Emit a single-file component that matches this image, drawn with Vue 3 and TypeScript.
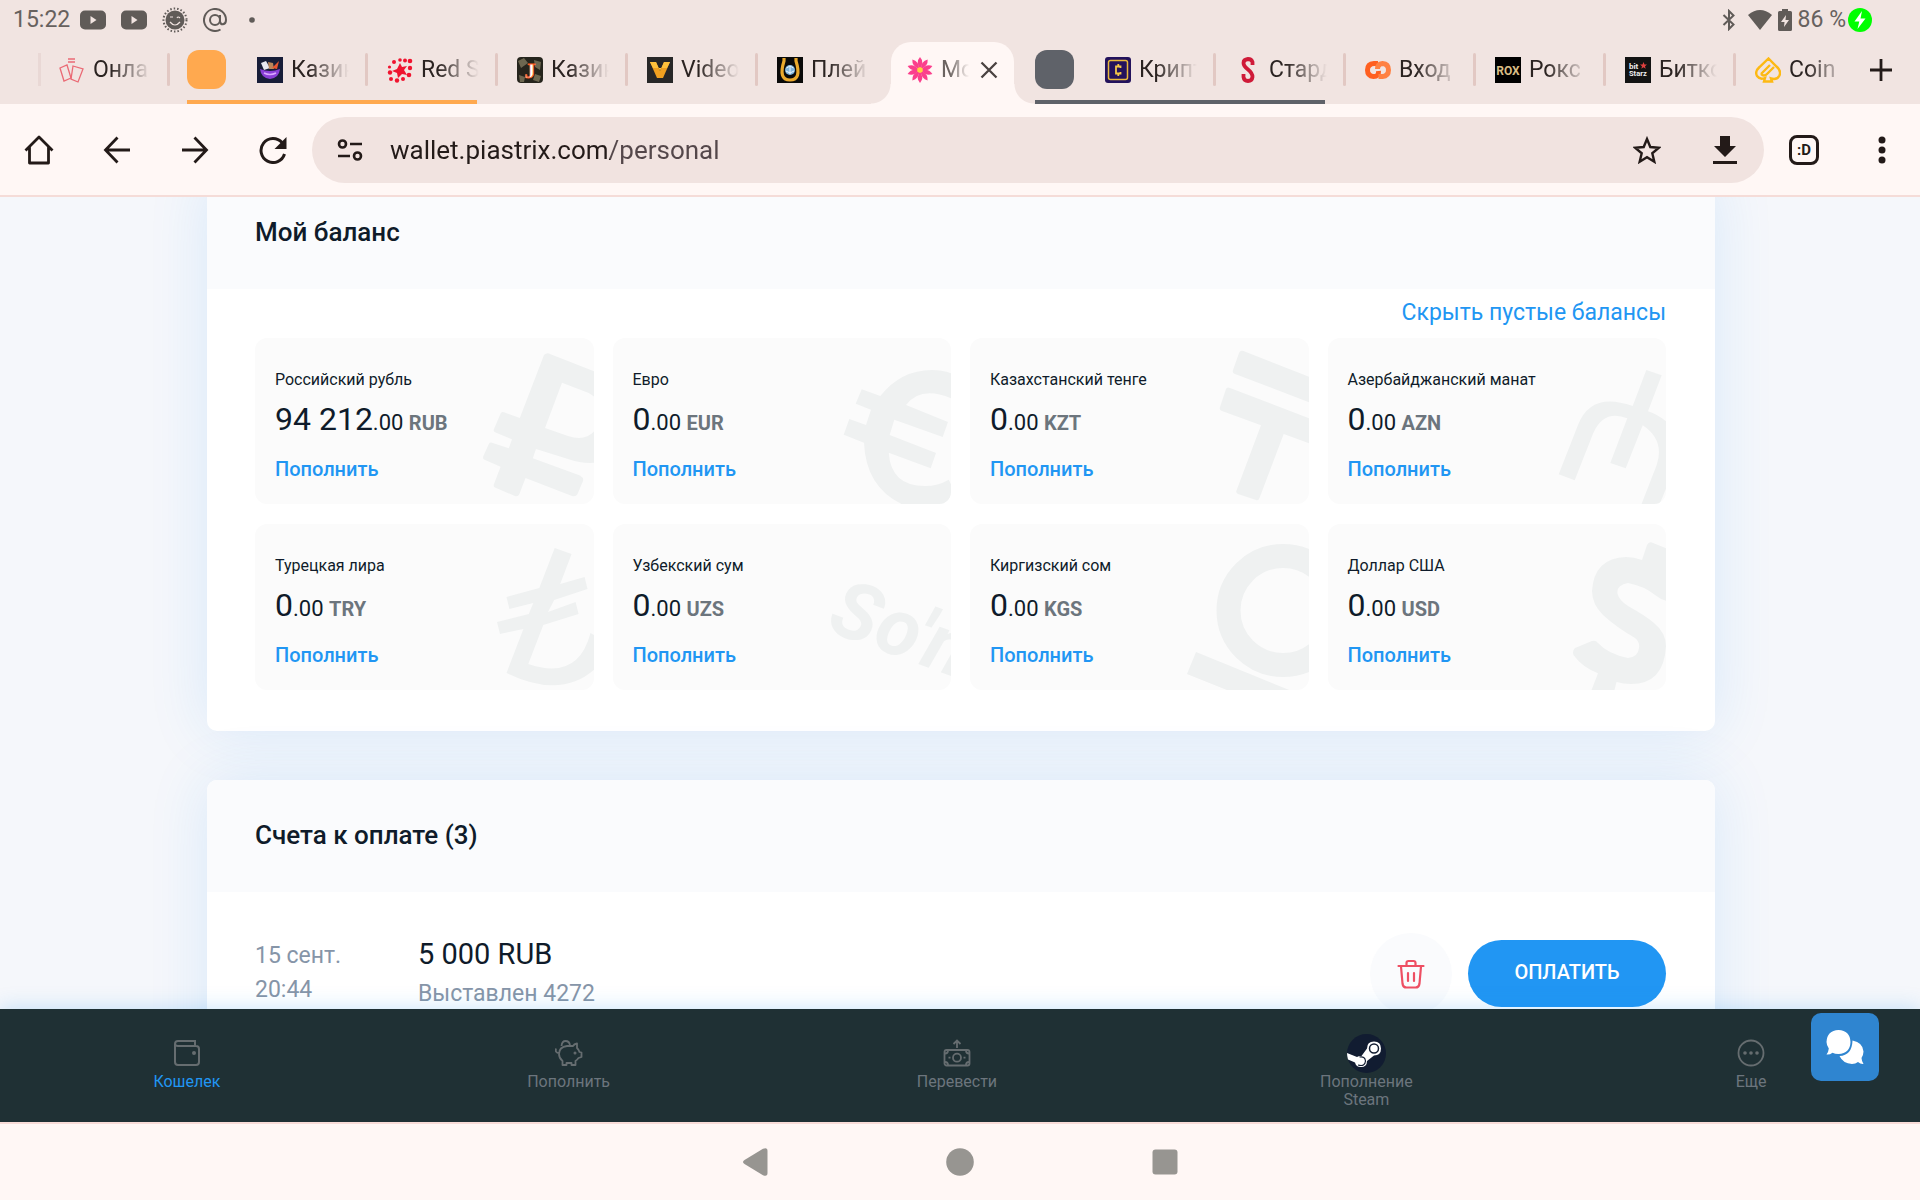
<script setup lang="ts">
interface Tab {
  title: string
  icon: string
}
interface Balance {
  name: string
  whole: string
  code: string
  mark: string
}

const petals = [0, 36, 72, 108, 144, 180, 216, 252, 288, 324]
  .map((a) => `<path transform="rotate(${a} 13 13)" d="M13 12Q8.500 5 13 0 17.500 5 13 12z"/>`)
  .join('')

const icons: Record<string, string> = {
  cards:
    '<g fill="none" stroke="#ea6a75" stroke-width="1.300"><path d="M1 11l7-3 4 13-7 3z"/><path d="M14 9l10 3-5 13-7-3z"/><path d="M9 2h7M9 5h7" stroke-width="1.500"/></g>',
  bowl:
    '<rect width="26" height="26" fill="#171d38"/><path d="M4 6l5-2 4 7-6 2z" fill="#e8e8f2"/><path d="M11 5l5 1 1 6h-5z" fill="#b9865c"/><path d="M15 11l7-7-2 8z" fill="#e8552f"/><path d="M3 12q10 4 20 0q-1 9-10 10Q4 21 3 12z" fill="#8a3fd6"/><path d="M7 16q6 3 12 0" stroke="#d8a8ff" stroke-width="1.500" fill="none"/>',
  redstar:
    '<g fill="#f0142f"><path d="M13 6l2 4 5-1-3 4 3 5-5-1-4 4-1-5-5-2 5-2z"/><circle cx="13" cy="3" r="1.800"/><circle cx="18" cy="3.500" r="2"/><circle cx="23" cy="4" r="2.300"/><circle cx="23" cy="11" r="2.200"/><circle cx="22" cy="18" r="2.300"/><circle cx="16" cy="22" r="2"/><circle cx="10" cy="23.500" r="2.200"/><circle cx="4" cy="22" r="2"/><circle cx="3" cy="15.500" r="2.200"/><circle cx="2.500" cy="10" r="1.600"/><circle cx="7" cy="5" r="2"/></g>',
  joker:
    '<rect width="26" height="26" rx="4" fill="#26241c"/><path d="M1 4l6-3 4 5-7 5zM17 3l7 2-1 8-5-3zM2 18l6 2-1 5H3zM18 17l6 2-2 6-6-2z" fill="#6d6750"/><text x="13" y="21" text-anchor="middle" font-family="Liberation Serif, serif" font-weight="700" font-size="22" fill="#fff" stroke="#ff5a1c" stroke-width=".8">J</text>',
  vulkan:
    '<rect width="26" height="26" fill="#272727"/><path d="M3 5h6l4 9 4-9h6l-7 16h-6z" fill="#f0a020"/><path d="M3 5h6l4 9 4-9h6l-3 6H6z" fill="#ffc23c"/>',
  horseshoe:
    '<rect width="26" height="26" fill="#0a0a0a"/><path d="M7 1v3Q1 23 13 23T19 4V1" fill="none" stroke="#eaa92c" stroke-width="3.200"/><circle cx="13" cy="13" r="5" fill="#7fb4dc"/><path d="M9.500 11l3.500-2 3.500 2M13 9v8M9 14l4 2 4-2" stroke="#e9f6ff" fill="none"/>',
  crypto:
    '<rect width="26" height="26" rx="3" fill="#23125c"/><rect x="3.500" y="3.500" width="19" height="19" rx="2" fill="none" stroke="#e8b93d" stroke-width="1.500"/><path d="M15.500 11V9.500h-4.500v7h4.500V15M13.300 7v2M13.300 17v2" fill="none" stroke="#f3c649" stroke-width="1.800"/>',
  starda:
    '<path d="M17.500 8V5q-1-3-4.500-3Q8.500 2.500 8.500 6q0 3 4.500 6.500Q17.500 16 17.500 20q-.500 4-4.500 4t-4.500-4v-3" fill="none" stroke="#cf1a38" stroke-width="3.800"/>',
  link:
    '<g fill="none" stroke="#ff5f20" stroke-width="5"><path d="M13 6.500H9Q2.500 7 2.500 13T8.500 19.500Q14 19.500 13.500 14"/><path d="M13.500 19.500h4q6-.500 6-6.500T17.500 6.500Q12.500 7 12.500 12" stroke="#ff8142"/></g>',
  rox:
    '<rect width="26" height="26" fill="#000"/><text x="13" y="17.500" text-anchor="middle" font-family="Roboto, sans-serif" font-weight="700" font-size="12" fill="#d9bd85">ROX</text>',
  bitstarz:
    '<rect width="26" height="26" fill="#131313"/><text x="4" y="12" font-family="Roboto, sans-serif" font-weight="700" font-size="8" fill="#eee">bit</text><text x="4" y="19" font-family="Roboto, sans-serif" font-weight="700" font-size="7.500" fill="#eee">Starz</text><path d="M18.500 5l1 2.500h2.500l-2 1.700.7 2.500-2.200-1.400-2.200 1.400.7-2.500-2-1.700h2.500z" fill="#e0403f"/>',
  coin:
    '<g fill="none" stroke="#fdb913" stroke-width="2.400"><path d="M9 24.500h8l-1-3q6 2 8.500-3 2-5-3-9L13.500 1.500 4.500 10q-5 4.500-2.500 9 3 4 8 2z"/><path d="M6 17l9-9M12 17l7-7M6 17q3 3 6 0"/></g>',
  flower: `<g fill="#fb3f8c">${petals}</g><circle cx="13" cy="13" r="2.800" fill="#ffd23e"/>`,
}

const strip: { color?: string; tabs: Tab[] }[] = [
  { tabs: [{ title: 'Онла', icon: 'cards' }] },
  { color: '#ffa94f', tabs: [{ title: 'Казин', icon: 'bowl' }, { title: 'Red S', icon: 'redstar' }] },
  {
    tabs: [
      { title: 'Казин', icon: 'joker' },
      { title: 'Video', icon: 'vulkan' },
      { title: 'Плей', icon: 'horseshoe' },
      { title: 'Мо', icon: 'flower' },
    ],
  },
  { color: '#5f6269', tabs: [{ title: 'Крипт', icon: 'crypto' }, { title: 'Стард', icon: 'starda' }] },
  {
    tabs: [
      { title: 'Вход', icon: 'link' },
      { title: 'Рокс', icon: 'rox' },
      { title: 'Битко', icon: 'bitstarz' },
      { title: 'Coin', icon: 'coin' },
    ],
  },
]

const balances: Balance[] = [
  {
    name: 'Российский рубль', whole: '94 212', code: 'RUB',
    mark: '<path fill-rule="evenodd" d="M100 17Q103 14 106 16L152 34V124.700Q138 126 124 121L92 111 88.800 120.300 136 137.500Q140 140 139 143L133.500 156Q132 159 128 158L81.500 140 75.400 156Q74 159 71 158L51 149.500Q49 148.500 50 146L56.600 128.700 40 121.500Q38.500 120.500 39.400 118L44.800 106Q46 104 48 104.700L64.800 110.300 68 101.300 51 94.300Q49 93.500 50 91L56.600 75.500Q58 73.500 60 74.300L75.800 80ZM118 44.700L144.800 55 152 60V91Q143 104 124 98L101 90Z"/>',
  },
  {
    name: 'Евро', whole: '0', code: 'EUR',
    mark: '<path d="M79.300 58Q100 32 130.700 32 142 32 152 36V61Q120 47 105 67L147 84 141.700 99 93.300 81.700 88.700 97 135 115 129.700 130.300 87.700 114.700Q90 148 124 148 137 148 147.700 141.700L152 150V170H110Q65 154 63 104.700L42.700 96.700 48.300 81 65 87 70 71.700 54.700 65.700 60.700 51.300Z"/>',
  },
  {
    name: 'Казахстанский тенге', whole: '0', code: 'KZT',
    mark: '<path d="M80 15Q81 12 84.500 13L152 39.500V65L76 36Q73 35 74 32ZM67 51Q68 48.500 71 50L152 81V106L124.700 96 100.500 160Q99.500 163 97 162L79 156Q76.500 155 77.500 152.500L102 87.300 63 73Q60 72 61 69Z"/>',
  },
  {
    name: 'Азербайджанский манат', whole: '0', code: 'AZN',
    mark: '<path d="M130.300 32L145.700 37.300 132 73.300Q143 77 152 85V146L142 170H124L140.700 127Q149 102 126.700 87.300L109.700 130.300 94.300 125 111.300 80.300Q88 71 77.300 95L58.700 142.300 42.700 136.300 62 87Q75 53 116.700 68Z"/>',
  },
  {
    name: 'Турецкая лира', whole: '0', code: 'TRY',
    mark: '<path d="M110.700 24L127.600 30 116.200 60 140.600 53 143.500 65 110.200 76 104 88 131.600 78 134.600 90 99.300 101 84.300 140Q134 157 146.500 109L152 112V144Q118 176 62.500 149L79.400 105 56 110 53 98 84.800 90 89.300 79 65.400 85 62.500 73 95.300 64Z"/>',
  },
  {
    name: 'Узбекский сум', whole: '0', code: 'UZS',
    mark: '<text transform="translate(24 106) rotate(20)" font-family="Roboto, sans-serif" font-weight="700" font-style="italic" font-size="80">So\'m</text>',
  },
  {
    name: 'Киргизский сом', whole: '0', code: 'KGS',
    mark: '<circle cx="124" cy="86.500" r="54.500" fill="none" stroke="#eff1f1" stroke-width="24"/><path d="M37 128L140 170H78L28 150Z"/>',
  },
  {
    name: 'Доллар США', whole: '0', code: 'USD',
    mark: '<path d="M126 36L131 21Q133 17 137 19L152 25V77Q145 76 139 71 128 62 112 59 100 61 101.600 70 103 76 112 82 130 92 138 99 150 109 150 122 148 160 115 160 107 160 100.500 158L97.500 170H74L82 149.300Q66 143 57.500 131 56 127 59 124L76 117Q80 116 82 119 92 130 112 134 122 133 123 124 124 118 119 114 100 103 87 91 76 80 76 67 78 34 110 33 118 33 126 36Z"/>',
  },
]
</script>

<template>
  <div class="screen">
    <header class="status">
      <div class="status-side">
        <span class="clock">15:22</span>
        <svg class="yt" viewBox="0 0 26 20"><rect width="26" height="19" y=".5" rx="5" /><path d="M10.500 6l6 4-6 4z" fill="#f1e4e1" /></svg>
        <svg class="yt" viewBox="0 0 26 20"><rect width="26" height="19" y=".5" rx="5" /><path d="M10.500 6l6 4-6 4z" fill="#f1e4e1" /></svg>
        <svg width="26" height="26" viewBox="0 0 26 26"><circle cx="13" cy="13" r="9.500" /><circle cx="13" cy="13" r="11.500" fill="none" stroke="#605b58" stroke-width="2" stroke-dasharray="1.500 2" /><path d="M8 15q5 6 10 0M8 10h3M15 11q1-2 3 0" fill="none" stroke="#f1e4e1" stroke-width="1.200" /></svg>
        <svg class="at" viewBox="0 0 24 24" fill="none" stroke="#605b58" stroke-width="2"><circle cx="12" cy="12" r="5" /><path d="M17 7v6.500q.5 3 3 2.800 3-.5 3-4.300A11 11 0 1 0 17.500 21.500" /></svg>
        <svg width="6" height="6" viewBox="0 0 6 6"><circle cx="3" cy="3" r="2.800" /></svg>
      </div>
      <div class="status-side right">
        <svg class="bt" viewBox="0 0 14 22" fill="none" stroke="#605b58" stroke-width="2"><path d="M1.500 6l10 9.500L7 20V2l4.500 4.500L1.500 16" /></svg>
        <svg class="wifi" viewBox="0 0 24 20"><path d="M0 5Q12-5 24 5L12 20z" /></svg>
        <svg class="batt" viewBox="0 0 14 22"><path d="M4 0h6v2h2.500q1.500 0 1.500 1.500v17q0 1.500-1.500 1.500h-11Q0 22 0 20.500v-17Q0 2 1.500 2H4z" /><path d="M8 6l-5 7h3.500L6 18l5-7H7.500z" fill="#f1e4e1" /></svg>
        <span>86 %</span>
        <svg class="bolt" viewBox="0 0 24 24"><circle cx="12" cy="12" r="12" fill="#0f0" /><path d="M14 3L6.500 13.500h4.800L9.500 21l8-10.500h-5z" fill="#fff" /></svg>
      </div>
    </header>

    <nav class="strip" aria-label="Вкладки">
      <div v-for="(g, gi) in strip" :key="gi" class="group" :class="{ colored: g.color }" :style="g.color ? { '--group': g.color } : undefined">
        <button v-if="g.color" class="chip" aria-label="Группа вкладок"></button>
        <div v-for="t in g.tabs" :key="t.icon" class="tab" :class="{ active: t.icon === 'flower', nosep: t.icon === 'horseshoe' || t.icon === 'coin' }">
          <svg class="fav" viewBox="0 0 26 26" v-html="icons[t.icon]"></svg>
          <button class="tab-title">{{ t.title }}</button>
          <button v-if="t.icon === 'flower'" class="close" aria-label="Закрыть">
            <svg width="18" height="18" viewBox="0 0 18 18"><path d="M1.500 1.500l15 15M16.500 1.500l-15 15" stroke="#4a4240" stroke-width="2.300" /></svg>
          </button>
        </div>
      </div>
      <button class="plus" aria-label="Новая вкладка">
        <svg width="22" height="22" viewBox="0 0 22 22"><path d="M11 0v22M0 11h22" stroke="#231a18" stroke-width="2.800" /></svg>
      </button>
    </nav>

    <div class="toolbar">
      <div class="tools">
        <button class="tool" aria-label="Домой"><svg width="30" height="30" viewBox="0 0 30 30" fill="none" stroke="#231a18" stroke-width="2.800"><path d="M1.500 15.500L15 2l13.500 13.500M5.500 12v16h19V12" stroke-linejoin="round" /></svg></button>
        <button class="tool" aria-label="Назад"><svg width="28" height="28" viewBox="0 0 28 28" fill="none" stroke="#231a18" stroke-width="2.800"><path d="M27 14H3M14.500 1.500L2.500 14l12 12.500" /></svg></button>
        <button class="tool" aria-label="Вперёд"><svg width="28" height="28" viewBox="0 0 28 28" fill="none" stroke="#231a18" stroke-width="2.800"><path d="M1 14h24M13.500 1.500l12 12.500-12 12.500" /></svg></button>
        <button class="tool" aria-label="Обновить"><svg width="28" height="28" viewBox="0 0 28 28"><path d="M23 6.500A12 12 0 1 0 25.500 18" fill="none" stroke="#231a18" stroke-width="3" /><path d="M27.500 1v12h-12z" fill="#231a18" /></svg></button>
      </div>
      <div class="omnibox">
        <button class="icon-btn" aria-label="Сведения о сайте"><svg width="26" height="22" viewBox="0 0 26 22" fill="none" stroke="#231a18" stroke-width="2.600"><circle cx="5.500" cy="5" r="3.500" /><path d="M13 5h12M1 17h12" /><circle cx="20.500" cy="17" r="3.500" /></svg></button>
        <input class="url" type="text" aria-label="Адрес" value="wallet.piastrix.com/personal" />
        <button class="icon-btn" aria-label="В закладки"><svg width="28" height="28" viewBox="0 0 28 28"><path d="M14 3l3.300 8 8.600.7-6.600 5.600 2 8.400L14 21.200l-7.300 4.500 2-8.400-6.600-5.600 8.600-.7z" fill="none" stroke="#231a18" stroke-width="2.400" /></svg></button>
        <button class="icon-btn dl" aria-label="Скачать"><svg width="24" height="28" viewBox="0 0 24 28" fill="#231a18"><path d="M7 0h10v10h6L12 21 1 10h6zM0 25h24v3H0z" /></svg></button>
      </div>
      <button class="switcher" aria-label="Вкладки">:D</button>
      <button class="menu" aria-label="Меню"><svg width="8" height="28" viewBox="0 0 8 28" fill="#231a18"><circle cx="4" cy="4" r="3.500" /><circle cx="4" cy="14" r="3.500" /><circle cx="4" cy="24" r="3.500" /></svg></button>
    </div>

    <main class="page">
      <section class="card">
        <h2 class="card-head">Мой баланс</h2>
        <div class="card-body">
          <div class="hide-row"><a href="#">Скрыть пустые балансы</a></div>
          <div class="balances">
            <article v-for="b in balances" :key="b.code" class="balance">
              <svg class="mark" width="150" height="166" viewBox="0 0 150 166" aria-hidden="true" v-html="b.mark"></svg>
              <h3>{{ b.name }}</h3>
              <p class="sum"><span class="whole">{{ b.whole }}</span>.00 <b>{{ b.code }}</b></p>
              <a href="#">Пополнить</a>
            </article>
          </div>
        </div>
      </section>

      <section class="card">
        <h2 class="card-head">Счета к оплате (3)</h2>
        <div class="invoice">
          <div class="date">15 сент.<br />20:44</div>
          <div class="bill">
            <div class="bill-sum">5 000 RUB</div>
            <div class="bill-note">Выставлен 4272</div>
          </div>
          <button class="trash" aria-label="Удалить">
            <svg width="28" height="30" viewBox="0 0 28 30" fill="none" stroke="#ee4f63" stroke-width="2.200" stroke-linecap="round"><path d="M1.500 7h25M9.500 6.500V4q0-2 2-2h5q2 0 2 2v2.500M4 7.500l1.500 17q.5 4 4 4h9q3.500 0 4-4L24 7.500M11 14v8M17 14v8" /></svg>
          </button>
          <button class="pay">ОПЛАТИТЬ</button>
        </div>
      </section>
    </main>

    <nav class="bottom" aria-label="Разделы">
      <a href="#" class="item current">
        <span class="glyph"><svg width="28" height="28" viewBox="0 0 28 28" fill="none" stroke="#666d70" stroke-width="2"><path d="M5 7h18q3 0 3 3v13q0 3-3 3H5q-3 0-3-3V5q0-3 3-3h17v5M5 7Q2 7 2 4.500" /><circle cx="21" cy="14" r="1" /></svg></span>
        Кошелек
      </a>
      <a href="#" class="item">
        <span class="glyph"><svg width="28" height="28" viewBox="0 0 28 28" fill="none" stroke="#666d70" stroke-width="1.800" stroke-linejoin="round"><path d="M4 15q0-7 8-8h6q1-2 4-2.500V9q2 2 2.500 4l2 .5v4.500l-3 1q-1.500 2-3 3v4h-4v-2h-5v2h-4v-4Q4 19 4 15zM4 14Q0 14 1 9.500M6.500 7Q7 2 10.500 2q4 0 4.500 4.500" /><circle cx="20" cy="14" r=".6" /></svg></span>
        Пополнить
      </a>
      <a href="#" class="item">
        <span class="glyph"><svg width="28" height="28" viewBox="0 0 28 28" fill="none" stroke="#666d70" stroke-width="1.800"><rect x="1.500" y="11" width="25" height="15.500" rx="2" /><circle cx="14" cy="18.700" r="4" /><path d="M2 14.500q3 0 3-3M26 14.500q-3 0-3-3M2 23q3 0 3 3M26 23q-3 0-3 3M14 9V2M10.500 5L14 1.500 17.500 5M5.500 18.700h2M20.500 18.700h2" /></svg></span>
        Перевести
      </a>
      <a href="#" class="item wide">
        <span class="glyph"><svg width="39" height="39" viewBox="0 0 39 39"><circle cx="19.500" cy="19.500" r="19.500" fill="#111c31" /><path d="M0 19l10 4q1-1 4.500-1l5.500-7.500q0-7 7-7t7 7-7 7L20 27q0 6-6 6-5 0-6-4.500L1 25.500Q0 22 0 19z" fill="#fff" /><circle cx="27" cy="14.500" r="4.500" fill="none" stroke="#111c31" stroke-width="1.500" /><path d="M11 31q7 2 7.500-4-.5-5-6-4" fill="none" stroke="#111c31" stroke-width="1.200" /></svg></span>
        Пополнение Steam
      </a>
      <a href="#" class="item">
        <span class="glyph"><svg width="28" height="28" viewBox="0 0 28 28"><circle cx="14" cy="14" r="12.500" fill="none" stroke="#666d70" stroke-width="1.800" /><g fill="#666d70"><circle cx="8" cy="14" r="1.800" /><circle cx="14" cy="14" r="1.800" /><circle cx="20" cy="14" r="1.800" /></g></svg></span>
        Еще
      </a>
      <button class="chat" aria-label="Чат">
        <svg width="38" height="36" viewBox="0 -2 38 36" fill="#fff"><path d="M12.500-1Q24-.5 24.500 11 24 22.500 12.500 23 9 23 6.500 21.700 3.500 24 .5 23.500 2.500 21 2.800 17.500.5 14 .5 11 1-.500 12.500-1z" /><path d="M26.500 9.500Q37 11.500 37.500 20.500q0 3-2 6.500.3 3.500 2 6-3 .3-5.500-2Q29.500 33 26 33q-9-.5-12.500-8 12.500-.5 13-15.500z" /></svg>
      </button>
    </nav>

    <footer class="system">
      <button aria-label="Назад"><svg width="28" height="28" viewBox="0 0 28 28"><path d="M3.500 12L22 .8Q26.500-1 26.500 3v22q0 4-4.500 2.200L3.500 16Q.5 14 3.500 12z" /></svg></button>
      <button aria-label="Домой"><svg width="28" height="28" viewBox="0 0 28 28"><circle cx="14" cy="14" r="13.800" /></svg></button>
      <button aria-label="Обзор"><svg width="28" height="28" viewBox="0 0 28 28"><rect x="1.500" y="1.500" width="25" height="25" rx="3" /></svg></button>
    </footer>
  </div>
</template>

<style>
body {
  margin: 0;
}
</style>

<style scoped>
.screen {
  display: flex;
  flex-direction: column;
  height: 100vh;
  overflow: hidden;
  background: #fff7f5;
  color: #0f1b2a;
  font-family: Roboto, sans-serif;
}
button {
  display: flex;
  align-items: center;
  justify-content: center;
  margin: 0;
  padding: 0;
  border: 0;
  background: none;
  color: inherit;
  font: inherit;
}
svg {
  display: block;
  flex: none;
}
a {
  color: #2196f3;
  text-decoration: none;
}
h2,
h3,
p {
  margin: 0;
  font: inherit;
}

.status {
  display: flex;
  flex: none;
  justify-content: space-between;
  height: 39px;
  padding: 0 48px 0 13px;
  background: #f1e4e1;
  color: #67615e;
  font-size: 23px;
  line-height: 39px;
}
.status-side {
  display: flex;
  align-items: center;
  gap: 15px;
}
.status-side svg {
  fill: #605b58;
}
.clock {
  margin-right: -5px;
}
.yt {
  width: 26px;
  height: 20px;
}
.status .at {
  width: 24px;
  height: 24px;
  margin-right: 7px;
  fill: none;
}
.right {
  gap: 6px;
}
.status .bt {
  width: 14px;
  height: 22px;
  margin-right: 6px;
  fill: none;
}
.wifi {
  width: 24px;
  height: 20px;
}
.batt {
  width: 14px;
  height: 22px;
}
.bolt {
  width: 24px;
  height: 24px;
  margin-left: -4px;
}

.strip {
  display: flex;
  flex: none;
  height: 65px;
  padding-left: 39px;
  background: linear-gradient(#e9d8d5, #e9d8d5) 38px 14px / 3px 33px no-repeat #f1e4e1;
}
.group {
  position: relative;
  display: flex;
  flex: none;
}
.group.colored {
  margin-left: 18px;
}
.group.colored::after {
  position: absolute;
  right: 20px;
  bottom: 0;
  left: 0;
  height: 4px;
  background: var(--group);
  content: '';
}
.chip {
  width: 39px;
  height: 39px;
  margin: 11px 11px 0 0;
  border-radius: 12px;
  background: var(--group);
}
.tab {
  position: relative;
  display: flex;
  align-items: center;
  box-sizing: border-box;
  width: 130px;
  padding: 0 18px 4px 20px;
}
.tab::after {
  position: absolute;
  top: 14px;
  right: -1px;
  width: 3px;
  height: 33px;
  border-radius: 2px;
  background: #e2c8c3;
  content: '';
}
.tab.nosep::after,
.tab.active::after {
  display: none;
}
.fav {
  width: 26px;
  height: 26px;
  margin-right: 8px;
}
.tab-title {
  flex: 1;
  justify-content: flex-start;
  overflow: hidden;
  color: #2b2321;
  font-size: 23px;
  line-height: 32px;
  white-space: nowrap;
  mask-image: linear-gradient(to right, #000 30%, transparent 100%);
}
.tab.active {
  padding-right: 19px;
}
.tab.active > * {
  z-index: 1;
}
.tab.active .tab-title {
  color: #6b6360;
}
.tab.active::before {
  position: absolute;
  inset: 3px 3px 0 4px;
  border-radius: 20px 20px 0 0;
  background: #fff7f5;
  content: '';
}
.tab.active::after {
  top: auto;
  right: -17px;
  bottom: 0;
  left: -16px;
  display: block;
  width: auto;
  height: 20px;
  border-radius: 0;
  background:
    radial-gradient(circle at 0 0, transparent 19px, #fff7f5 20px) left / 20px 20px no-repeat,
    radial-gradient(circle at 100% 0, transparent 19px, #fff7f5 20px) right / 20px 20px no-repeat;
}
.close {
  margin-left: 11px;
}
.plus {
  margin: 0 28px 4px auto;
}

.toolbar {
  display: flex;
  flex: none;
  align-items: center;
  height: 91px;
  padding-left: 24px;
  border-bottom: 2px solid #f5dcd8;
}
.tools {
  display: flex;
  gap: 48px;
  margin-right: 24px;
}
.tool {
  width: 30px;
}
.omnibox {
  display: flex;
  flex: 1;
  align-items: center;
  box-sizing: border-box;
  height: 66px;
  padding: 0 27px 0 25px;
  border-radius: 33px;
  background: #f1e3e0;
}
.url {
  flex: 1;
  min-width: 0;
  margin: 0 27px;
  padding: 0;
  border: 0;
  outline: 0;
  background: linear-gradient(to right, #241b19 220px, #54474a 220px) text;
  color: transparent;
  font: 400 26px/40px Roboto, sans-serif;
}
.dl {
  margin-left: 52px;
}
.switcher {
  box-sizing: border-box;
  width: 30px;
  height: 30px;
  margin: 0 0 0 25px;
  border: 3px solid #231a18;
  border-radius: 8px;
  color: #231a18;
  font-size: 15px;
  font-weight: 700;
  line-height: 20px;
}
.menu {
  margin: 0 34px 0 59px;
}

.page {
  display: flex;
  flex: 1;
  flex-direction: column;
  gap: 49px;
  min-height: 0;
  overflow: hidden;
  padding: 0 205px 0 207px;
  background: #f5f7fb;
}
.card {
  flex: none;
  border-radius: 10px;
  background: #fff;
  box-shadow: 0 0 60px rgba(33, 140, 243, 0.13);
}
.card:first-child {
  margin-top: -20px;
}
.card-head {
  height: 112px;
  padding: 0 48px;
  border-radius: 10px 10px 0 0;
  background: #fafbfd;
  font-size: 26px;
  font-weight: 500;
  line-height: 110px;
}
.card-body {
  padding: 0 49px 41px 48px;
}
.hide-row {
  height: 49px;
  font-size: 23px;
  line-height: 48px;
  text-align: right;
}
.balances {
  display: grid;
  grid-template-columns: repeat(4, 1fr);
  gap: 20px 19px;
}
.balance {
  position: relative;
  box-sizing: border-box;
  height: 166px;
  overflow: hidden;
  padding: 32px 20px 0;
  border-radius: 12px;
  background: #fbfbfb;
}
.mark {
  position: absolute;
  top: 0;
  right: 0;
  fill: #eff1f1;
}
.balance > :not(svg) {
  position: relative;
}
.balance h3 {
  font-size: 16px;
  line-height: 20px;
}
.sum {
  height: 40px;
  margin: 9px 0 18px;
  font-size: 22px;
  line-height: 40px;
}
.whole {
  font-size: 32px;
}
.sum b {
  color: #6c757d;
  font-size: 20px;
}
.balance a {
  display: block;
  width: max-content;
  font-size: 20px;
  font-weight: 500;
  line-height: 24px;
}

.invoice {
  display: flex;
  align-items: flex-start;
  padding: 41px 49px 60px 48px;
}
.date {
  width: 163px;
  padding-top: 6px;
  color: #8695a8;
  font-size: 23px;
  line-height: 34px;
}
.bill {
  flex: 1;
  padding-top: 3px;
}
.bill-sum {
  font-size: 29px;
  line-height: 36px;
}
.bill-note {
  margin-top: 7px;
  color: #8695a8;
  font-size: 23px;
  line-height: 30px;
}
.trash {
  width: 82px;
  height: 82px;
  border-radius: 50%;
  background: #fafbfd;
}
.pay {
  width: 198px;
  height: 67px;
  margin: 7px 0 0 16px;
  padding-bottom: 3px;
  border-radius: 34px;
  background: #2196f3;
  color: #fff;
  font-size: 20px;
  font-weight: 500;
}

.bottom {
  position: relative;
  display: flex;
  flex: none;
  justify-content: space-around;
  height: 113px;
  border-bottom: 2px solid #f8dcd8;
  background: #1f3034;
  box-shadow: 0 0 20px rgba(33, 150, 243, 0.25);
}
.item {
  display: flex;
  flex-direction: column;
  align-items: center;
  padding-top: 24px;
  color: #6c757d;
  font-size: 16px;
  line-height: 18px;
  text-align: center;
}
.current {
  color: #2196f3;
}
.wide {
  width: 125px;
}
.glyph {
  display: flex;
  align-items: center;
  height: 40px;
}
.chat {
  position: absolute;
  top: 4px;
  right: 41px;
  width: 68px;
  height: 68px;
  border-radius: 10px;
  background: #2f85d0;
}

.system {
  position: relative;
  display: flex;
  flex: none;
  align-items: center;
  justify-content: center;
  gap: 177px;
  height: 76px;
  background: #fff7f5;
}
.system svg {
  fill: #979591;
}
</style>
